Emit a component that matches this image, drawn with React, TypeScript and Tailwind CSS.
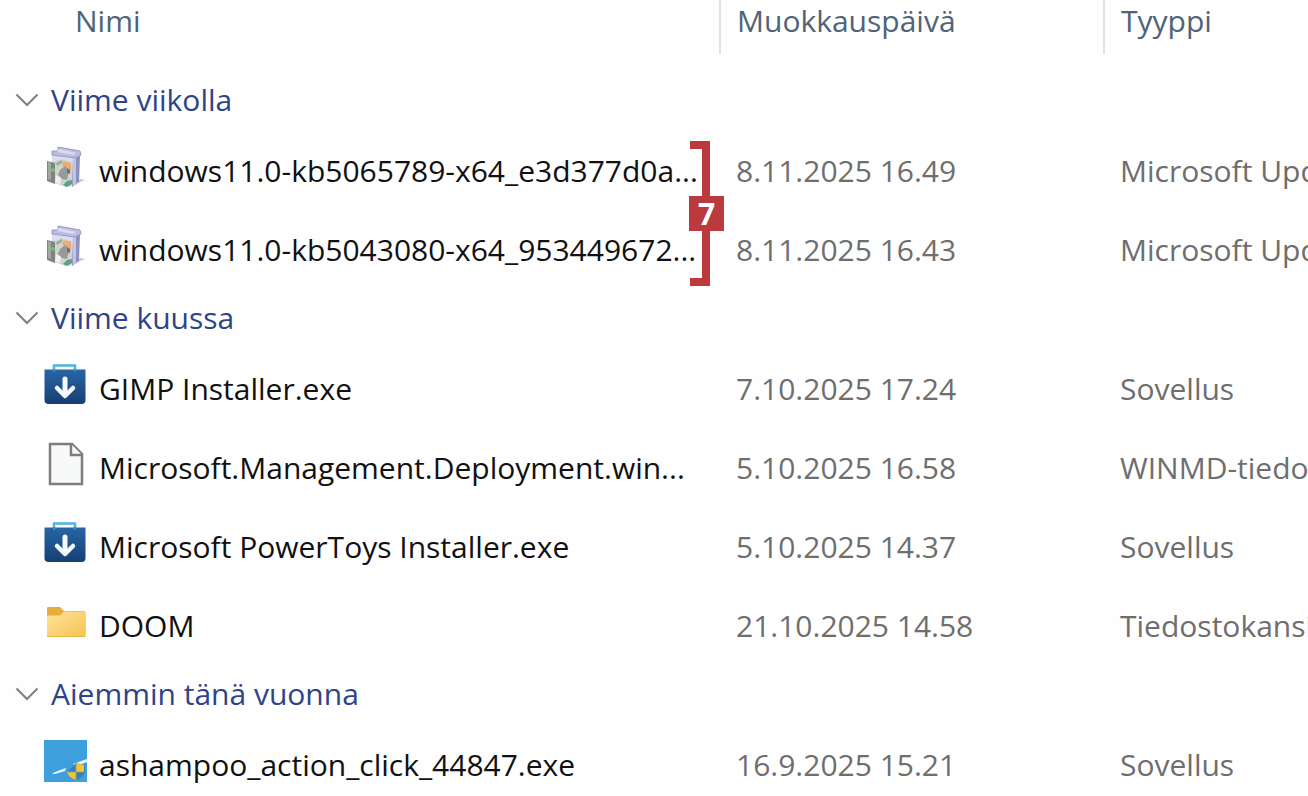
import type { ReactNode } from "react";

type IconName = "update" | "installer" | "document" | "folder" | "ashampoo";

type FileItem = {
  name: string;
  date: string;
  type: string;
  icon: IconName;
};

type FileGroup = {
  title: string;
  files: FileItem[];
  step?: number;
};

const groups: FileGroup[] = [
  {
    title: "Viime viikolla",
    step: 7,
    files: [
      { name: "windows11.0-kb5065789-x64_e3d377d0a...", date: "8.11.2025 16.49", type: "Microsoft Update", icon: "update" },
      { name: "windows11.0-kb5043080-x64_953449672...", date: "8.11.2025 16.43", type: "Microsoft Update", icon: "update" },
    ],
  },
  {
    title: "Viime kuussa",
    files: [
      { name: "GIMP Installer.exe", date: "7.10.2025 17.24", type: "Sovellus", icon: "installer" },
      { name: "Microsoft.Management.Deployment.win...", date: "5.10.2025 16.58", type: "WINMD-tiedosto", icon: "document" },
      { name: "Microsoft PowerToys Installer.exe", date: "5.10.2025 14.37", type: "Sovellus", icon: "installer" },
      { name: "DOOM", date: "21.10.2025 14.58", type: "Tiedostokansio", icon: "folder" },
    ],
  },
  {
    title: "Aiemmin tänä vuonna",
    files: [{ name: "ashampoo_action_click_44847.exe", date: "16.9.2025 15.21", type: "Sovellus", icon: "ashampoo" }],
  },
];

const icons: Record<IconName, ReactNode> = {
  update: (
    <>
      <path d="M30 40 42 35 38 34 32 36Z" fill="#c9c9c9" />
      <path d="M9 6 33 9 34 39 27 42 8 36Z" fill="#dcdeef" />
      <path d="M33 9 37 11 36 37 29 42 30 12Z" fill="#8e90bd" />
      <path d="m30 13 3-2v28l-3 2Z" fill="#c3c5e2" />
      <path d="M15 2 37 6 38 10 32 13 9 10V6h6Z" fill="#b9bbe0" stroke="#9a9cc6" />
      <path d="m16 4 18 4-4 2-16-3Z" fill="#d8daf0" />
      <path d="M9 17 19 14 29 17V39l-6 3-14-5Z" fill="#d0d4cf" />
      <path d="M4 16 12 18v21l-8-3Z" fill="#7f8381" />
      <path d="m5 17 3 1v17l-3-1Z" fill="#a3a7a4" />
      <path d="m20 16 8 2v9l-5-2-4-5Z" fill="#e6ad78" />
      <path d="m13 18 6-3v3l-5 3Z" fill="#8db59b" />
      <path d="m17 25 5-4 4 5-2 9-5-1-4-4Z" fill="#989a98" />
      <path d="m24 23 3 2v4l-3-1Z" fill="#6c7174" />
      <path d="m13 30 5 3-1 6-5-2Z" fill="#f0f3ef" />
      <path d="m24 36 5-1v4l-5 3-4-2Z" fill="#5aa382" />
      <circle cx="10" cy="25" r="2" fill="#62cb5b" />
    </>
  ),
  installer: (
    <>
      <path d="M11 8V2.500h21V8" fill="none" stroke="#4eb4df" strokeWidth="2.5" />
      <path d="M1.500 6.500h41V37a4 4 0 0 1-4 4h-33a4 4 0 0 1-4-4Z" fill="url(#bag)" />
      <path d="M10 6.500v2h2.500v-2M30.500 6.500v2H33v-2" fill="#3b94c8" />
      <path d="M22 16v14" stroke="#f5f8fc" strokeWidth="5" strokeLinecap="round" />
      <path d="m14 25 8 8 8-8" fill="none" stroke="#f5f8fc" strokeWidth="4.500" strokeLinecap="round" strokeLinejoin="round" />
    </>
  ),
  document: (
    <>
      <path d="M7 2h22l10 10v30H7Z" fill="#f8f9f9" stroke="#7d7d7d" strokeWidth="2.500" />
      <path d="M28 2v11h11" fill="#fff" stroke="#7d7d7d" strokeWidth="2.500" />
    </>
  ),
  folder: (
    <>
      <path d="M4 8q0-1 1-1h12l4 4h20q1.500 0 1.500 1.500V34H4Z" fill="#e9ad3d" />
      <path d="M4 15.500h13l4-4h20.500q1 0 1 1V36q0 1-1 1H5q-1 0-1-1Z" fill="url(#folder)" />
      <path d="M4 36.500h38" stroke="#e9b648" />
    </>
  ),
  ashampoo: (
    <>
      <path d="M1 1h43v42H1Z" fill="#3d9fdc" />
      <path d="m9 35 3-2 11-4-1 3-10 3Z" fill="#eff8fd" />
      <path d="M30 25 44 20v3l-11 4Z" fill="#eff8fd" />
      <path d="m25 32 8-8 9 2v7q-3 6-9 8-7-2-8-9Z" fill="#3480b8" />
      <path d="m33 24 8 2v7h-8ZM24 33h9v8q-7-2-9-8Z" fill="#f3c53b" />
      <path d="M33 24v17M24 33h17" stroke="#8fa66b" />
    </>
  ),
};

function FileIcon({ name }: { name: IconName }) {
  return (
    <svg viewBox="0 0 44 45" className="mb-1.5 h-[45px] w-11 shrink-0" aria-hidden="true">
      {icons[name]}
    </svg>
  );
}

function Chevron() {
  return (
    <svg viewBox="0 0 24 14" className="h-[14px] w-6 shrink-0" fill="none" stroke="#808080" strokeWidth="2" aria-hidden="true">
      <path d="m1.500 1.500 10.500 10.500 10.500-10.500" />
    </svg>
  );
}

// Bracket that joins the first two rows of a group
function StepBracket({ step }: { step: number }) {
  return (
    <div className="absolute top-[9px] right-[10px] flex h-[145px] w-5 items-center justify-end border-y-8 border-r-8 border-[#ba3a3d]">
      <span className="-mr-[22px] flex size-[35px] shrink-0 items-center justify-center bg-[#ba3a3d] font-['Open_Sans',sans-serif] text-[30px] leading-none font-bold text-white">
        {step}
      </span>
    </div>
  );
}

function FileRow({ file, step }: { file: FileItem; step?: number }) {
  return (
    <tr className="h-[79px] text-[#6e6e6e]">
      <td className="relative p-0 pb-0.5 pl-[43px]">
        <div className="flex items-center gap-3 text-[#111]">
          <FileIcon name={file.icon} />
          <span>{file.name}</span>
        </div>
        {step && <StepBracket step={step} />}
      </td>
      <td className="p-0 pb-0.5 pl-4">{file.date}</td>
      <td className="p-0 pb-0.5 pl-4">{file.type}</td>
    </tr>
  );
}

export default function App() {
  return (
    <main className="h-screen overflow-hidden bg-[#fefefe] font-['Open_Sans','Noto_Sans',sans-serif] text-[30px] leading-10">
      <svg className="absolute size-0" aria-hidden="true">
        <defs>
          <linearGradient id="bag" x1="0" y1="0" x2="0" y2="1">
            <stop stopColor="#2865a6" />
            <stop offset="1" stopColor="#163f72" />
          </linearGradient>
          <linearGradient id="folder" x1="0" y1="0" x2="1" y2="1">
            <stop stopColor="#ffe299" />
            <stop offset="1" stopColor="#f5c452" />
          </linearGradient>
        </defs>
      </svg>
      <table className="w-full table-fixed border-collapse text-left whitespace-nowrap">
        <colgroup>
          <col className="w-[720px]" />
          <col className="w-96" />
          <col />
        </colgroup>
        <thead>
          <tr className="h-[54px] text-[#4f6478]">
            <th className="p-0 pb-3 pl-[75px] font-normal">Nimi</th>
            <th className="border-l-2 border-[#e2e2e2] p-0 pb-3 pl-4 font-normal">Muokkauspäivä</th>
            <th className="border-l-2 border-[#e2e2e2] p-0 pb-3 pl-4 font-normal">Tyyppi</th>
          </tr>
          <tr className="h-[18px]" aria-hidden="true">
            <td className="p-0" colSpan={3} />
          </tr>
        </thead>
        {groups.map((group) => (
          <tbody key={group.title}>
            <tr className="h-[60px]">
              <th colSpan={3} className="p-0 pb-1 pl-[15px] font-normal">
                <button type="button" aria-expanded="true" className="flex items-center gap-3 text-[#2f4389]">
                  <Chevron />
                  {group.title}
                </button>
              </th>
            </tr>
            {group.files.map((file, i) => (
              <FileRow key={file.name} file={file} step={i === 0 ? group.step : undefined} />
            ))}
          </tbody>
        ))}
      </table>
    </main>
  );
}
